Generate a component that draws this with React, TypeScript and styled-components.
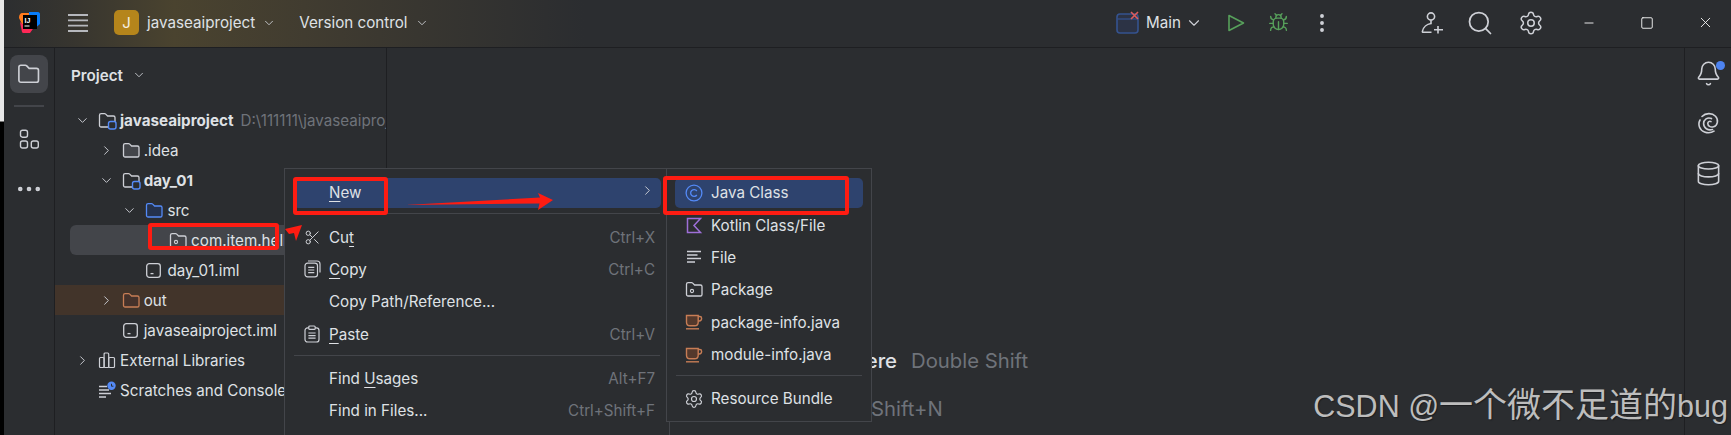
import styled, { createGlobalStyle } from "styled-components";
import type { ReactNode } from "react";
import { Bell, Bug, ChevronDown, ChevronRight, Database, EllipsisVertical, Minus, Scissors, Search, Settings, Square, X } from "lucide-react";

const GlobalStyle = createGlobalStyle`
  html, body { margin: 0; padding: 0; background: #2b2d30; overflow: hidden; }
  * { box-sizing: border-box; }
  svg { flex: none; }
`;

const Page = styled.div`
  position: relative;
  width: 1731px;
  height: 435px;
  display: flex;
  overflow: hidden;
  font-family: Inter, "Noto Sans", sans-serif;
  font-size: 15.2px;
  color: #dfe1e5;
  background: #2b2d30;
`;

const Sliver = styled.div`
  flex: 0 0 4px;
  background: linear-gradient(#e8e8e8 0, #e8e8e8 121px, #000 122px);
`;

const Window = styled.div`
  flex: 1;
  min-width: 0;
  display: flex;
  flex-direction: column;
`;

const TitleBar = styled.header`
  flex: 0 0 48px;
  padding: 0 17px 2px 0;
  display: flex;
  align-items: center;
  border-bottom: 1px solid #1e1f22;
  background: linear-gradient(90deg, #2c2e30 0, #37352f 70px, #4a432f 170px, #413c30 300px, #2b2d30 580px);
`;

const Cluster = styled.div<{ $gap?: number; $left?: number }>`
  display: flex;
  align-items: center;
  gap: ${(p) => p.$gap ?? 0}px;
  margin-left: ${(p) => p.$left ?? 0}px;
`;

const RightTools = styled.div`
  margin-left: auto;
  display: flex;
  align-items: center;
`;

const Badge = styled.div`
  width: 25px;
  height: 25px;
  border-radius: 5px;
  background: #b5851b;
  color: #f5efe0;
  font-size: 15px;
  display: flex;
  align-items: center;
  justify-content: center;
`;

const TitleText = styled.span`
  color: #dfe1e5;
  white-space: nowrap;
`;

const Body = styled.div`
  flex: 1;
  min-height: 0;
  display: flex;
`;

const LeftStripe = styled.nav`
  flex: 0 0 51px;
  border-right: 1px solid #1e1f22;
  padding: 7px 0 0 6px;
  display: flex;
  flex-direction: column;
  align-items: flex-start;
`;

const StripeButton = styled.div<{ $active?: boolean; $top?: number }>`
  width: 38px;
  height: 38px;
  margin-top: ${(p) => p.$top ?? 0}px;
  border-radius: 8px;
  display: flex;
  align-items: center;
  justify-content: center;
  background: ${(p) => (p.$active ? "#43454a" : "transparent")};
`;

const StripeRule = styled.div`
  width: 30px;
  height: 2px;
  margin: 12px 0 13px 4px;
  background: #43454a;
`;

const ProjectPanel = styled.aside`
  flex: 0 0 332px;
  border-right: 1px solid #1e1f22;
  overflow: hidden;
`;

const PanelHeader = styled.div`
  height: 57px;
  padding: 0 0 3px 16px;
  display: flex;
  align-items: center;
  gap: 9px;
  font-weight: 600;
`;

const Row = styled.div<{ $depth: number; $selected?: boolean; $tint?: boolean }>`
  height: 30px;
  display: flex;
  align-items: center;
  white-space: nowrap;
  padding-left: ${(p) => 20 + p.$depth * 23.7 - (p.$selected ? 15 : 0)}px;
  margin-left: ${(p) => (p.$selected ? 15 : 0)}px;
  border-radius: ${(p) => (p.$selected ? "6px 0 0 6px" : "0")};
  background: ${(p) => (p.$selected ? "#43454a" : p.$tint ? "#42342a" : "transparent")};
`;

const ChevronSlot = styled.span`
  flex: 0 0 23px;
  display: flex;
  align-items: center;
`;

const NodeIcon = styled.span`
  flex: 0 0 22px;
  display: flex;
  align-items: center;
`;

const NodeText = styled.span<{ $bold?: boolean }>`
  font-weight: ${(p) => (p.$bold ? 700 : 400)};
`;

const PathText = styled.span`
  color: #6f737a;
  margin-left: 7px;
`;

const Editor = styled.main`
  flex: 1;
  min-width: 0;
  padding-top: 300px;
  display: flex;
  flex-direction: column;
  gap: 22px;
`;

const Hint = styled.div<{ $left: number }>`
  padding-left: ${(p) => p.$left}px;
  height: 26px;
  font-size: 20.3px;
  line-height: 26px;
  font-weight: 500;
  white-space: nowrap;
  color: #dfe1e5;
`;

const HintKey = styled.span`
  color: #6f737a;
  font-weight: 400;
  margin-left: 14px;
`;

const RightStripe = styled.aside`
  flex: 0 0 47px;
  border-left: 1px solid #1e1f22;
  padding-top: 13px;
  display: flex;
  flex-direction: column;
  align-items: center;
  gap: 26px;
`;

const StripeSlot = styled.div`
  height: 24px;
  display: flex;
  align-items: center;
  justify-content: center;
`;

const Menu = styled.div<{ $left: number; $width: number; $height: number }>`
  position: absolute;
  top: 168px;
  left: ${(p) => p.$left}px;
  width: ${(p) => p.$width}px;
  height: ${(p) => p.$height}px;
  padding-top: 7.5px;
  background: #2b2d30;
  border: 1px solid #43454a;
  display: flex;
  flex-direction: column;
`;

const Item = styled.div<{ $active?: boolean }>`
  flex: 0 0 30px;
  margin: 1.2px 8px;
  padding: 0 6px 0 11px;
  display: flex;
  align-items: center;
  gap: 9px;
  border-radius: 5px;
  white-space: nowrap;
  background: ${(p) => (p.$active ? "#2e436e" : "transparent")};
`;

const ItemIcon = styled.span`
  flex: 0 0 16px;
  min-width: 0;
  height: 18px;
  display: flex;
  align-items: center;
  justify-content: center;
`;

const Shortcut = styled.span`
  margin-left: auto;
  color: #6f737a;
`;

const Mnemonic = styled.span`
  text-decoration: underline;
  text-underline-offset: 3px;
`;

const MenuRule = styled.div`
  flex: 0 0 1px;
  margin: 4.5px 9px 6.5px;
  background: #43454a;
`;

const RedBox = styled.div<{ $x: number; $y: number; $w: number; $h: number }>`
  position: absolute;
  left: ${(p) => p.$x}px;
  top: ${(p) => p.$y}px;
  width: ${(p) => p.$w}px;
  height: ${(p) => p.$h}px;
  border: 4px solid #fe1c12;
  border-radius: 3px;
`;

const ArrowLayer = styled.svg`
  position: absolute;
  left: 0;
  top: 0;
`;

const Watermark = styled.div`
  position: absolute;
  right: 3px;
  top: 385px;
  font-family: "Liberation Sans", "Noto Sans CJK SC", sans-serif;
  font-size: 30.5px;
  line-height: 40px;
  color: #bdbdbd;
  white-space: nowrap;
  text-shadow: 1px 1px 1px rgba(0, 0, 0, 0.35);
`;

const Han = styled.span`
  font-size: 34px;
`;

const NotifyDot = styled.span`
  position: absolute;
  left: 1716px;
  top: 61px;
  width: 9px;
  height: 9px;
  border-radius: 50%;
  background: #4d83f0;
`;

const GREY = "#ced0d6";
const BLUE = "#548af7";

const FolderIcon = ({ size = 19, color = GREY, fill = "none", badge = false, dot = false }: { size?: number; color?: string; fill?: string; badge?: boolean; dot?: boolean }) => (
  <svg width={size} height={size} viewBox="0 0 19 19" fill="none">
    <path
      d="M1.5 4.2C1.5 3.3 2.2 2.6 3.1 2.6H6.6C7 2.6 7.4 2.8 7.7 3.1L9.6 5H15.4C16.3 5 17 5.7 17 6.6V14.4C17 15.3 16.3 16 15.4 16H3.1C2.2 16 1.5 15.3 1.5 14.4V4.2Z"
      stroke={color}
      strokeWidth="1.3"
      fill={fill}
    />
    {dot && <circle cx="7" cy="11" r="1.6" stroke={color} strokeWidth="1.1" />}
    {badge && <rect x="10.5" y="10.5" width="7.5" height="7.5" rx="2" stroke={BLUE} strokeWidth="1.4" fill="#2b2d30" />}
  </svg>
);

const ModuleFileIcon = () => (
  <svg width="17" height="17" viewBox="0 0 17 17" fill="none">
    <rect x="1.7" y="1.7" width="13.6" height="13.6" rx="2.6" stroke={GREY} strokeWidth="1.3" />
    <path d="M5.5 11.6H8.5" stroke={GREY} strokeWidth="1.3" />
  </svg>
);

const LibrariesIcon = () => (
  <svg width="18" height="18" viewBox="0 0 18 18" fill="none" stroke={GREY} strokeWidth="1.2">
    <rect x="1.5" y="6.5" width="4.6" height="10" rx="1" />
    <rect x="6.1" y="2" width="4.6" height="14.5" rx="1" />
    <rect x="10.7" y="6.5" width="5.8" height="10" rx="1" />
  </svg>
);

const ScratchesIcon = () => (
  <svg width="19" height="19" viewBox="0 0 19 19" fill="none" stroke={GREY} strokeWidth="1.3">
    <path d="M1 5.5H9M1 9H11M1 12.5H13M1 16H8" />
    <circle cx="13.5" cy="4.8" r="4.2" fill={BLUE} stroke="none" />
    <path d="M13.5 2.8V5.2H15.4" stroke="#2b2d30" strokeWidth="1" />
  </svg>
);

const FileLinesIcon = () => (
  <svg width="16" height="16" viewBox="0 0 16 16" fill="none" stroke={GREY} strokeWidth="1.3">
    <path d="M1 2.5H15M1 6H11.5M1 9.5H15M1 13H9" />
  </svg>
);

const CopyIcon = () => (
  <svg width="17" height="18" viewBox="0 0 17 18" fill="none" stroke={GREY} strokeWidth="1.2">
    <rect x="1" y="3.2" width="12.5" height="13.6" rx="2.6" />
    <path d="M4 1H13C14.8 1 16 2.2 16 4V12.5" />
    <path d="M4.2 7.4H10.3M4.2 10H10.3M4.2 12.6H10.3" />
  </svg>
);

const PasteIcon = () => (
  <svg width="16" height="18" viewBox="0 0 16 18" fill="none" stroke={GREY} strokeWidth="1.2">
    <rect x="1" y="2.8" width="14" height="14.2" rx="2.6" />
    <rect x="4.8" y="1" width="6.4" height="3.4" rx="1" fill="#2b2d30" />
    <path d="M4.4 8H11.6M4.4 10.6H11.6M4.4 13.2H11.6" />
  </svg>
);

const ClassIcon = () => (
  <svg width="18" height="18" viewBox="0 0 18 18" fill="none" stroke={BLUE} strokeWidth="1.3">
    <circle cx="9" cy="9" r="7.9" />
    <path d="M11.8 7A3.4 3.4 0 1 0 11.8 11" />
  </svg>
);

const KotlinIcon = () => (
  <svg width="17" height="17" viewBox="0 0 17 17" fill="none" stroke="#9e6fd8" strokeWidth="1.5">
    <path d="M1.5 1.5H14.5L8 8.5L14.5 15.5H1.5V1.5Z" />
  </svg>
);

const CupIcon = () => (
  <svg width="18" height="18" viewBox="0 0 18 18" fill="none" stroke="#c77d55" strokeWidth="1.4">
    <path d="M1.5 2.5H13.2V9.2C13.2 11.2 11.8 12.7 9.7 12.7H5C3 12.7 1.5 11.2 1.5 9.2V2.5Z" fill="#54392c" />
    <path d="M13.2 3.5H14.8C15.9 3.5 16.6 4.2 16.6 5.2V5.6C16.6 7 15.6 8 14.2 8H13.2" />
    <path d="M1 15.8H14" />
  </svg>
);

const SpiralIcon = () => (
  <svg width="22" height="22" viewBox="0 0 22 22" fill="none" stroke={GREY} strokeWidth="1.6" strokeLinecap="round">
    <path d="M5 4.5C8.5 .8 15 .6 18.5 4.2C21.8 7.6 20.8 13.5 16.5 14.8C13.5 15.7 10.8 14 10.8 11.5C10.8 9.8 12.5 8.8 14 9.6" />
    <path d="M14.5 6.6C10.5 4.8 6.6 7.6 6.6 11.6C6.6 16 11 19 15.5 17.5" />
    <path d="M3 8C.6 12.5 2.4 18 7.5 20C11 21.3 14.5 20.8 17 19.2" />
  </svg>
);

const StructureIcon = () => (
  <svg width="21" height="21" viewBox="0 0 21 21" fill="none" stroke={GREY} strokeWidth="1.4">
    <rect x="1.5" y="1.2" width="7" height="7" rx="2" />
    <rect x="1.5" y="12" width="7" height="7" rx="2" />
    <rect x="12.3" y="12" width="7" height="7" rx="2" />
  </svg>
);

const RunConfigIcon = () => (
  <svg width="24" height="23" viewBox="0 0 24 23" fill="none">
    <rect x="1" y="3" width="21" height="19" rx="3" stroke="#35538f" strokeWidth="1.6" fill="#2c3345" />
    <path d="M1.5 8H21" stroke="#35538f" strokeWidth="1.2" />
    <path d="M15 1L22 8M22 1L15 8" stroke="#db5c5c" strokeWidth="1.6" />
  </svg>
);

const RunIcon = () => (
  <svg width="18" height="18" viewBox="0 0 18 18" fill="none" stroke="#57a05b" strokeWidth="1.6" strokeLinejoin="round">
    <path d="M2 1.5L16.5 9L2 16.5V1.5Z" />
  </svg>
);

const AddUserIcon = () => (
  <svg width="23" height="23" viewBox="0 0 23 23" fill="none" stroke={GREY} strokeWidth="1.6">
    <circle cx="10" cy="5.5" r="3.6" />
    <path d="M10 9.5V12.5C6 13 2.2 16 1.4 20.4C1.3 21 1.7 21.3 2.2 21.3H10.5" />
    <path d="M17 15V22.5M13 18.8H22" />
  </svg>
);

const Logo = () => (
  <svg width="21" height="21" viewBox="0 0 21 21">
    <path d="M0 6C0 3 1 1 4 1H10V12H3L0 6Z" fill="#ff7a1c" />
    <path d="M10 0H19C20 0 21 1 21 2V12L15 17H10V0Z" fill="#087cfa" />
    <path d="M1 10L3 20C3.2 20.8 4 21 5 21H11L16 14H6L1 10Z" fill="#fe2857" />
    <rect x="4" y="3" width="14" height="14" fill="#000" />
    <text x="5.5" y="10.5" fontFamily="Liberation Sans, sans-serif" fontSize="7" fontWeight="700" fill="#fff">IJ</text>
    <rect x="5.5" y="13.5" width="5" height="1" fill="#fff" />
  </svg>
);

const Hamburger = () => (
  <svg width="20" height="18" viewBox="0 0 20 18" stroke="#b6b8bd" strokeWidth="1.8">
    <path d="M0 1H20M0 6.3H20M0 11.6H20M0 17H20" />
  </svg>
);

const Down = ({ size = 14, color = GREY }: { size?: number; color?: string }) => (
  <ChevronDown size={size} color={color} strokeWidth={1.5} />
);

const Tree = ({ depth, open, icon, children, selected, tint }: { depth: number; open?: boolean; icon: ReactNode; children: ReactNode; selected?: boolean; tint?: boolean }) => (
  <Row $depth={depth} $selected={selected} $tint={tint}>
    <ChevronSlot>
      {open === true && <ChevronDown size={15} color={GREY} strokeWidth={1.5} />}
      {open === false && <ChevronRight size={15} color={GREY} strokeWidth={1.5} />}
    </ChevronSlot>
    <NodeIcon>{icon}</NodeIcon>
    {children}
  </Row>
);

export default function App() {
  return (
    <Page>
      <GlobalStyle />
      <Sliver />
      <Window>
        <TitleBar>
          <Cluster $left={15}><Logo /></Cluster>
          <Cluster $left={28}><Hamburger /></Cluster>
          <Cluster $left={26}><Badge>J</Badge></Cluster>
          <Cluster $left={8} $gap={7}><TitleText>javaseaiproject</TitleText><Down /></Cluster>
          <Cluster $left={23} $gap={7}><TitleText>Version control</TitleText><Down /></Cluster>
          <RightTools>
            <RunConfigIcon />
            <Cluster $left={6} $gap={4}><TitleText>Main</TitleText><Down size={18} /></Cluster>
            <Cluster $left={24}><RunIcon /></Cluster>
            <Cluster $left={23}><Bug size={21} color="#57a05b" strokeWidth={1.6} /></Cluster>
            <Cluster $left={21}><EllipsisVertical size={24} color={GREY} strokeWidth={1.9} /></Cluster>
            <Cluster $left={87}><AddUserIcon /></Cluster>
            <Cluster $left={22}><Search size={28} color={GREY} strokeWidth={1.5} /></Cluster>
            <Cluster $left={24}><Settings size={26} color={GREY} strokeWidth={1.4} /></Cluster>
            <Cluster $left={38}><Minus size={14} color="#fff" strokeWidth={1.5} /></Cluster>
            <Cluster $left={44}><Square size={14} color="#fff" strokeWidth={1.5} /></Cluster>
            <Cluster $left={43}><X size={17} color="#fff" strokeWidth={1.2} /></Cluster>
          </RightTools>
        </TitleBar>
        <Body>
          <LeftStripe>
            <StripeButton $active><FolderIcon size={24} /></StripeButton>
            <StripeRule />
            <StripeButton><StructureIcon /></StripeButton>
            <StripeButton $top={12}><EllipsisVertical size={30} color={GREY} strokeWidth={1.7} transform="rotate(90)" /></StripeButton>
          </LeftStripe>
          <ProjectPanel>
            <PanelHeader>Project <Down /></PanelHeader>
            <Tree depth={0} open icon={<FolderIcon badge />}>
              <NodeText $bold>javaseaiproject</NodeText>
              <PathText>D:\111111\javaseaiproject</PathText>
            </Tree>
            <Tree depth={1} open={false} icon={<FolderIcon fill="#43454a" />}><NodeText>.idea</NodeText></Tree>
            <Tree depth={1} open icon={<FolderIcon badge />}><NodeText $bold>day_01</NodeText></Tree>
            <Tree depth={2} open icon={<FolderIcon color={BLUE} fill="#25324d" />}><NodeText>src</NodeText></Tree>
            <Tree depth={3} selected icon={<FolderIcon dot />}><NodeText>com.item.hello</NodeText></Tree>
            <Tree depth={2} icon={<ModuleFileIcon />}><NodeText>day_01.iml</NodeText></Tree>
            <Tree depth={1} open={false} tint icon={<FolderIcon color="#c77d55" fill="#45322b" />}><NodeText>out</NodeText></Tree>
            <Tree depth={1} icon={<ModuleFileIcon />}><NodeText>javaseaiproject.iml</NodeText></Tree>
            <Tree depth={0} open={false} icon={<LibrariesIcon />}><NodeText>External Libraries</NodeText></Tree>
            <Tree depth={0} icon={<ScratchesIcon />}><NodeText>Scratches and Consoles</NodeText></Tree>
          </ProjectPanel>
          <Editor>
            <Hint $left={321}>Search Everywhere<HintKey>Double Shift</HintKey></Hint>
            <Hint $left={331}>Go to File<HintKey>Ctrl+Shift+N</HintKey></Hint>
          </Editor>
          <RightStripe>
            <StripeSlot><Bell size={27} color={GREY} strokeWidth={1.4} /></StripeSlot>
            <StripeSlot><SpiralIcon /></StripeSlot>
            <StripeSlot><Database size={27} color={GREY} strokeWidth={1.4} /></StripeSlot>
          </RightStripe>
        </Body>
      </Window>

      <Menu $left={284} $width={386} $height={300}>
        <Item $active>
          <ItemIcon />
          <span><Mnemonic>N</Mnemonic>ew</span>
          <Shortcut><ChevronRight size={15} color={GREY} strokeWidth={1.5} /></Shortcut>
        </Item>
        <MenuRule />
        <Item><ItemIcon><Scissors size={17} color={GREY} strokeWidth={1.4} /></ItemIcon><span>Cu<Mnemonic>t</Mnemonic></span><Shortcut>Ctrl+X</Shortcut></Item>
        <Item><ItemIcon><CopyIcon /></ItemIcon><span><Mnemonic>C</Mnemonic>opy</span><Shortcut>Ctrl+C</Shortcut></Item>
        <Item><ItemIcon /><span>Copy Path/Reference...</span></Item>
        <Item><ItemIcon><PasteIcon /></ItemIcon><span><Mnemonic>P</Mnemonic>aste</span><Shortcut>Ctrl+V</Shortcut></Item>
        <MenuRule />
        <Item><ItemIcon /><span>Find <Mnemonic>U</Mnemonic>sages</span><Shortcut>Alt+F7</Shortcut></Item>
        <Item><ItemIcon /><span>Find in Files...</span><Shortcut>Ctrl+Shift+F</Shortcut></Item>
      </Menu>

      <Menu $left={666} $width={206} $height={254}>
        <Item $active><ItemIcon><ClassIcon /></ItemIcon><span>Java Class</span></Item>
        <Item><ItemIcon><KotlinIcon /></ItemIcon><span>Kotlin Class/File</span></Item>
        <Item><ItemIcon><FileLinesIcon /></ItemIcon><span>File</span></Item>
        <Item><ItemIcon><FolderIcon dot /></ItemIcon><span>Package</span></Item>
        <Item><ItemIcon><CupIcon /></ItemIcon><span>package-info.java</span></Item>
        <Item><ItemIcon><CupIcon /></ItemIcon><span>module-info.java</span></Item>
        <MenuRule />
        <Item><ItemIcon><Settings size={20} color={GREY} strokeWidth={1.4} /></ItemIcon><span>Resource Bundle</span></Item>
      </Menu>

      <RedBox $x={293} $y={177} $w={95} $h={38} />
      <RedBox $x={663} $y={176} $w={186} $h={39} />
      <RedBox $x={148} $y={223} $w={131} $h={27} />
      <ArrowLayer width="1731" height="435" viewBox="0 0 1731 435">
        <path d="M405 205L540 197.5L538 193L553 200L538 210L539.5 203.5Z" fill="#fe1c12" />
        <path d="M285 229L302 225L296 241L294 233L289 234Z" fill="#fe1c12" />
      </ArrowLayer>

      <Watermark>CSDN @<Han>一个微不足道的</Han>bug</Watermark>
      <NotifyDot />
    </Page>
  );
}
